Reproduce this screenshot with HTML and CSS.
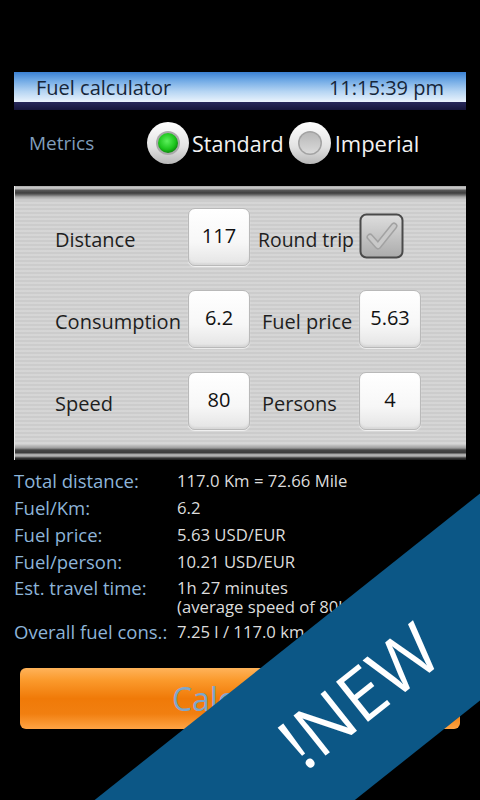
FILE: index.html
```html
<!DOCTYPE html>
<html>
<head>
<meta charset="utf-8">
<link rel="stylesheet" href="styles.css">
</head>
<body>
<div class="screen">
  <div class="titlebar">
    <div class="title-main">
      <span>Fuel calculator</span>
      <span>11:15:39 pm</span>
    </div>
    <div class="title-shade"></div>
  </div>

  <div class="metrics">
    <span class="metrics-label">Metrics</span>
    <div class="radio-group">
      <svg class="radio" width="44" height="44" viewBox="0 0 44 44">
        <defs>
          <linearGradient id="rOut" x1="0" y1="0" x2="0" y2="1">
            <stop offset="0" stop-color="#ffffff"/>
            <stop offset="0.6" stop-color="#e2e2e2"/>
            <stop offset="1" stop-color="#b8b8b8"/>
          </linearGradient>
          <radialGradient id="gIn" cx="0.45" cy="0.4" r="0.6">
            <stop offset="0" stop-color="#5cf05c"/>
            <stop offset="0.7" stop-color="#1cc41c"/>
            <stop offset="1" stop-color="#0e8a0e"/>
          </radialGradient>
          <linearGradient id="gray" x1="0" y1="0" x2="0" y2="1">
            <stop offset="0" stop-color="#b8b8b8"/>
            <stop offset="1" stop-color="#dadada"/>
          </linearGradient>
        </defs>
        <circle cx="22" cy="22" r="21" fill="url(#rOut)"/>
        <circle cx="22" cy="22" r="12" fill="#a9a9a9"/>
        <circle cx="22" cy="22" r="10" fill="url(#gIn)"/>
      </svg>
      <span class="radio-text">Standard</span>
      <svg class="radio" width="44" height="44" viewBox="0 0 44 44">
        <circle cx="22" cy="22" r="21" fill="url(#rOut)"/>
        <circle cx="22" cy="22" r="12" fill="#a3a3a3"/>
        <circle cx="22" cy="22" r="10.5" fill="url(#gray)"/>
      </svg>
      <span class="radio-text">Imperial</span>
    </div>
  </div>

  <div class="panel">
    <div class="edge edge-top"></div>
    <div class="grid">
      <span class="lbl">Distance</span>
      <div class="box">117</div>
      <span class="lbl lbl-b lbl-rt">Round trip</span>
      <div class="check-cell">
        <svg width="45" height="46" viewBox="0 0 45 46">
          <defs>
            <linearGradient id="cb" x1="0" y1="0" x2="0" y2="1">
              <stop offset="0" stop-color="#dedede"/>
              <stop offset="1" stop-color="#ababab"/>
            </linearGradient>
          </defs>
          <rect x="1.5" y="1.5" width="42" height="43" rx="6" fill="url(#cb)" stroke="#4a4a4a" stroke-width="2"/>
          <path d="M11 24 L19 33 L35 13" fill="none" stroke="#a2a2a2" stroke-width="7" stroke-linecap="round" stroke-linejoin="round"/>
          <path d="M11 24 L19 33 L35 13" fill="none" stroke="#c9c9c9" stroke-width="4" stroke-linecap="round" stroke-linejoin="round"/>
        </svg>
      </div>

      <span class="lbl">Consumption</span>
      <div class="box">6.2</div>
      <span class="lbl lbl-b">Fuel price</span>
      <div class="box">5.63</div>

      <span class="lbl">Speed</span>
      <div class="box">80</div>
      <span class="lbl lbl-b">Persons</span>
      <div class="box">4</div>
    </div>
    <div class="edge edge-bottom"></div>
  </div>

  <div class="results">
    <div class="row"><span class="k">Total distance:</span><span class="v">117.0 Km = 72.66 Mile</span></div>
    <div class="row"><span class="k">Fuel/Km:</span><span class="v">6.2</span></div>
    <div class="row"><span class="k">Fuel price:</span><span class="v">5.63 USD/EUR</span></div>
    <div class="row"><span class="k">Fuel/person:</span><span class="v">10.21 USD/EUR</span></div>
    <div class="row row-tight"><span class="k">Est. travel time:</span><span class="v">1h 27 minutes<br>(average speed of 80km/h)</span></div>
    <div class="row"><span class="k">Overall fuel cons.:</span><span class="v">7.25 l / 117.0 km</span></div>
  </div>

  <div class="btn-wrap">
    <div class="btn">Calculate</div>
  </div>

  <div class="ribbon">!NEW</div>
</div>
</body>
</html>
```

FILE: styles.css
```css
* { box-sizing: border-box; }
html, body {
  margin: 0;
  padding: 0;
  background: #000;
}
.screen {
  position: relative;
  width: 480px;
  height: 800px;
  overflow: hidden;
  background: #000;
  font-family: "Open Sans", "DejaVu Sans", sans-serif;
  padding-top: 72px;
}
.titlebar {
  margin: 0 14px;
  height: 38px;
  display: flex;
  flex-direction: column;
}
.title-main {
  height: 30px;
  background: linear-gradient(to bottom, #3a80d2 0%, #74ace6 30%, #b6d5f3 65%, #eaf3fc 100%);
  display: flex;
  justify-content: space-between;
  align-items: center;
  padding: 0 22px;
  font-size: 20px;
  color: #16263a;
}
.title-shade {
  height: 8px;
  background: linear-gradient(to bottom, #27285a, #15153a);
}
.metrics {
  height: 76px;
  display: flex;
  align-items: center;
  padding-left: 29px;
  padding-bottom: 10px;
}
.metrics-label {
  width: 117px;
  font-size: 19px;
  color: #7f9dbb;
}
.radio-group {
  display: flex;
  align-items: center;
}
.radio { display: block; }
.radio-text {
  font-size: 21.5px;
  color: #f2f2f2;
  margin: 0 4px 0 2px;
}
.radio-text:last-child { margin-left: 3px; font-size: 22px; }
.panel {
  margin: 0 14px;
  height: 274px;
  display: flex;
  flex-direction: column;
  background:
    repeating-linear-gradient(to bottom, rgba(255,255,255,0.06) 0 2px, rgba(0,0,0,0.035) 2px 4px),
    #d3d3d3;
  border-left: 1px solid #eaeaea;
}
.edge { flex: none; }
.edge-top {
  height: 14px;
  background: linear-gradient(to bottom, #9a9a9a 0, #c9c9c9 1px, #b8b8b8 3px, #5a5a5a 4px, #3e3e3e 7px, #6d6d6d 9px, #a9a9a9 11px, #cfcfcf 14px);
}
.edge-bottom {
  margin-top: auto;
  height: 15px;
  background: linear-gradient(to bottom, #c4c4c4 0, #9c9c9c 3px, #474747 5px, #3b3b3b 8px, #a5a5a5 9px, #b5b5b5 11px, #3a3a3a 13px, #1a1a1a 15px);
}
.grid {
  display: grid;
  grid-template-columns: 133px 62px 109px 62px;
  grid-auto-rows: 58px;
  row-gap: 24px;
  padding: 8px 0 0 40px;
  align-items: center;
}
.lbl {
  font-size: 20px;
  color: #1e1e1e;
  padding-top: 4px;
}
.lbl-b { padding-left: 12px; }
.lbl-rt { padding-left: 8px; font-size: 19.4px; }
.box {
  height: 58px;
  border-radius: 7px;
  background: linear-gradient(to bottom, #ffffff 0%, #f7f7f7 60%, #e4e4e4 100%);
  border: 1px solid #b9b9b9;
  box-shadow: 0 1px 1px rgba(255,255,255,0.7), inset 0 -2px 2px rgba(0,0,0,0.06);
  display: flex;
  align-items: center;
  justify-content: center;
  font-size: 20px;
  color: #111;
  padding-bottom: 4px;
}
.check-cell {
  display: flex;
  align-items: center;
}
.check-cell svg { display: block; margin-top: -2px; }
.results {
  padding: 11px 0 0 14px;
}
.row {
  display: flex;
  line-height: 19px;
  margin-bottom: 8px;
}
.row-tight { line-height: 18.5px; margin-bottom: 6px; }
.row:last-child { margin-bottom: 0; }
.k {
  flex: none;
  min-width: 163px;
  font-size: 18.5px;
  color: #8db4d8;
}
.v {
  font-size: 16.7px;
  color: #dcdcdc;
  white-space: nowrap;
}
.btn-wrap {
  padding: 27px 20px 0 20px;
}
.btn {
  height: 61px;
  border-radius: 6px;
  background: linear-gradient(to bottom, #ffb35a 0%, #fb9a2c 20%, #f07a08 50%, #f17f10 75%, #ffa444 100%);
  display: flex;
  align-items: center;
  justify-content: center;
  font-size: 32px;
  color: #7ea6cc;
}
.ribbon {
  position: absolute;
  left: 8px;
  top: 613px;
  width: 700px;
  height: 162px;
  background: #0c5786;
  color: #ffffff;
  transform: rotate(-38.5deg);
  font-family: "Open Sans", "DejaVu Sans", sans-serif;
  font-size: 72px;
  line-height: 162px;
  text-align: center;
}
```
